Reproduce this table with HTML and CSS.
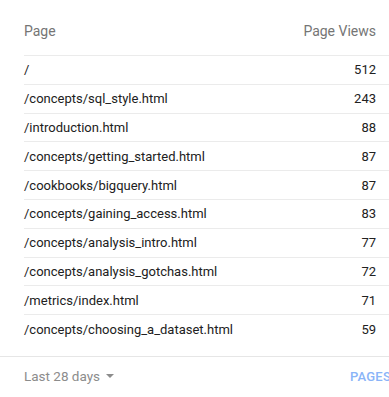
FILE: index.html
```html
<!DOCTYPE html>
<html>
<head>
<meta charset="utf-8">
<link rel="stylesheet" href="styles.css">
</head>
<body>
<div class="card">
  <div class="table">
    <div class="row head">
      <span class="page">Page</span>
      <span class="views">Page Views</span>
    </div>
    <div class="row"><span class="page">/</span><span class="views">512</span></div>
    <div class="row"><span class="page">/concepts/sql_style.html</span><span class="views">243</span></div>
    <div class="row"><span class="page">/introduction.html</span><span class="views">88</span></div>
    <div class="row"><span class="page">/concepts/getting_started.html</span><span class="views">87</span></div>
    <div class="row"><span class="page">/cookbooks/bigquery.html</span><span class="views">87</span></div>
    <div class="row"><span class="page">/concepts/gaining_access.html</span><span class="views">83</span></div>
    <div class="row"><span class="page">/concepts/analysis_intro.html</span><span class="views">77</span></div>
    <div class="row"><span class="page">/concepts/analysis_gotchas.html</span><span class="views">72</span></div>
    <div class="row"><span class="page">/metrics/index.html</span><span class="views">71</span></div>
    <div class="row last"><span class="page">/concepts/choosing_a_dataset.html</span><span class="views">59</span></div>
  </div>
  <div class="footer">
    <span class="range">Last 28 days <span class="caret"></span></span>
    <span class="link">PAGES</span>
  </div>
</div>
</body>
</html>
```
FILE: styles.css
```css
html, body {
  margin: 0;
  padding: 0;
  background: #fff;
  overflow: hidden;
}
body {
  font-family: Roboto, "Liberation Sans", sans-serif;
  font-size: 13px;
  color: #212121;
}
.card {
  width: 400px;
}
.table {
  padding-left: 24px;
  padding-bottom: 13px;
  border-bottom: 1px solid #e6e6e6;
}
.row {
  display: flex;
  justify-content: space-between;
  align-items: center;
  height: 27.8px;
  padding-right: 24px;
  border-bottom: 1px solid #ebebeb;
}
.row.last {
  border-bottom: none;
}
.row.head {
  height: 56px;
  padding-top: 6px;
  box-sizing: border-box;
  color: #757575;
  font-size: 14px;
  align-items: center;
}
.footer {
  display: flex;
  justify-content: space-between;
  align-items: center;
  height: 39px;
  padding-left: 24px;
  padding-right: 9px;
}
.range {
  color: #8c8c8c;
  font-size: 13.5px;
  display: flex;
  align-items: center;
}
.caret {
  display: inline-block;
  margin-left: 6px;
  width: 0;
  height: 0;
  border-left: 4px solid transparent;
  border-right: 4px solid transparent;
  border-top: 4px solid #8c8c8c;
}
.link {
  color: #8ab4f8;
  font-weight: 500;
  letter-spacing: 0.2px;
}
```
